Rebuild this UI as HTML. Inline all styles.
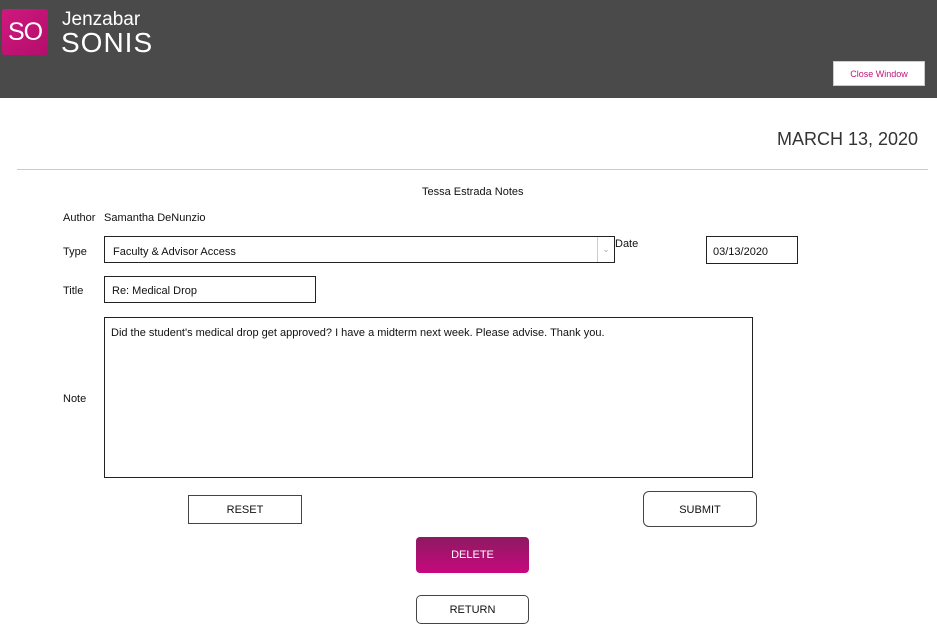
<!DOCTYPE html>
<html><head><style>
body{margin:0;width:937px;height:636px;background:#fff;font-family:"Liberation Sans",Arial,sans-serif;font-size:11px;color:#111;position:relative;overflow:hidden}
.hdr{position:absolute;left:0;top:0;width:937px;height:98px;background:#4a4a4a}
.logo{position:absolute;left:2px;top:9px;width:46px;height:46px;background:linear-gradient(135deg,#d0187e,#b30e6c);border-radius:3px;color:#fff;font-size:25px;line-height:46px;text-align:center;letter-spacing:-1px}
.jz{position:absolute;left:62px;top:9px;color:#fff;font-size:19px}
.so{position:absolute;left:61px;top:27px;color:#fff;font-size:28px;letter-spacing:1px}
.cw{position:absolute;left:833px;top:61px;width:92px;height:25px;background:#fff;border:1px solid #ccc;box-sizing:border-box;color:#c0157a;font-size:9px;text-align:center;line-height:24px}
.a{position:absolute}
.box{position:absolute;border:1px solid #222;box-sizing:border-box;background:#fff}
.btn{position:absolute;border:1px solid #444;box-sizing:border-box;text-align:center;font-size:11px;background:#fff}
</style></head><body>
<div class="hdr"><div class="logo">SO</div><div class="jz">Jenzabar</div><div class="so">SONIS</div><div class="cw">Close Window</div></div>
<div class="a" style="left:777px;top:129px;font-size:18px;color:#333">MARCH 13, 2020</div>
<div class="a" style="left:17px;top:169px;width:911px;height:1px;background:#ccc"></div>
<div class="a" style="left:422px;top:186px">Tessa Estrada Notes</div>
<div class="a" style="left:63px;top:212px">Author</div>
<div class="a" style="left:104px;top:212px">Samantha DeNunzio</div>
<div class="a" style="left:63px;top:246px">Type</div>
<div class="box" style="left:104px;top:236px;width:511px;height:27px"><span style="position:absolute;left:8px;top:9px">Faculty &amp; Advisor Access</span><span style="position:absolute;right:0;top:0;width:16px;height:25px;border-left:1px solid #ccc;color:#aaa;font-size:9px;text-align:center;line-height:25px">⌄</span></div>
<div class="a" style="left:615px;top:238px">Date</div>
<div class="box" style="left:706px;top:236px;width:92px;height:28px"><span style="position:absolute;left:6px;top:9px">03/13/2020</span></div>
<div class="a" style="left:63px;top:285px">Title</div>
<div class="box" style="left:104px;top:276px;width:212px;height:27px"><span style="position:absolute;left:7px;top:8px">Re: Medical Drop</span></div>
<div class="a" style="left:63px;top:393px">Note</div>
<div class="box" style="left:104px;top:317px;width:649px;height:161px"><span style="position:absolute;left:6px;top:9px">Did the student's medical drop get approved? I have a midterm next week. Please advise. Thank you.</span></div>
<div class="btn" style="left:188px;top:495px;width:114px;height:29px;line-height:29px">RESET</div>
<div class="btn" style="left:643px;top:491px;width:114px;height:36px;line-height:36px;border-radius:6px">SUBMIT</div>
<div class="btn" style="left:416px;top:537px;width:113px;height:36px;line-height:37px;border:none;border-radius:4px;color:#fff;background:linear-gradient(#8c1a60,#c8087e)">DELETE</div>
<div class="btn" style="left:416px;top:595px;width:113px;height:29px;line-height:29px;border-radius:5px">RETURN</div>
</body></html>
